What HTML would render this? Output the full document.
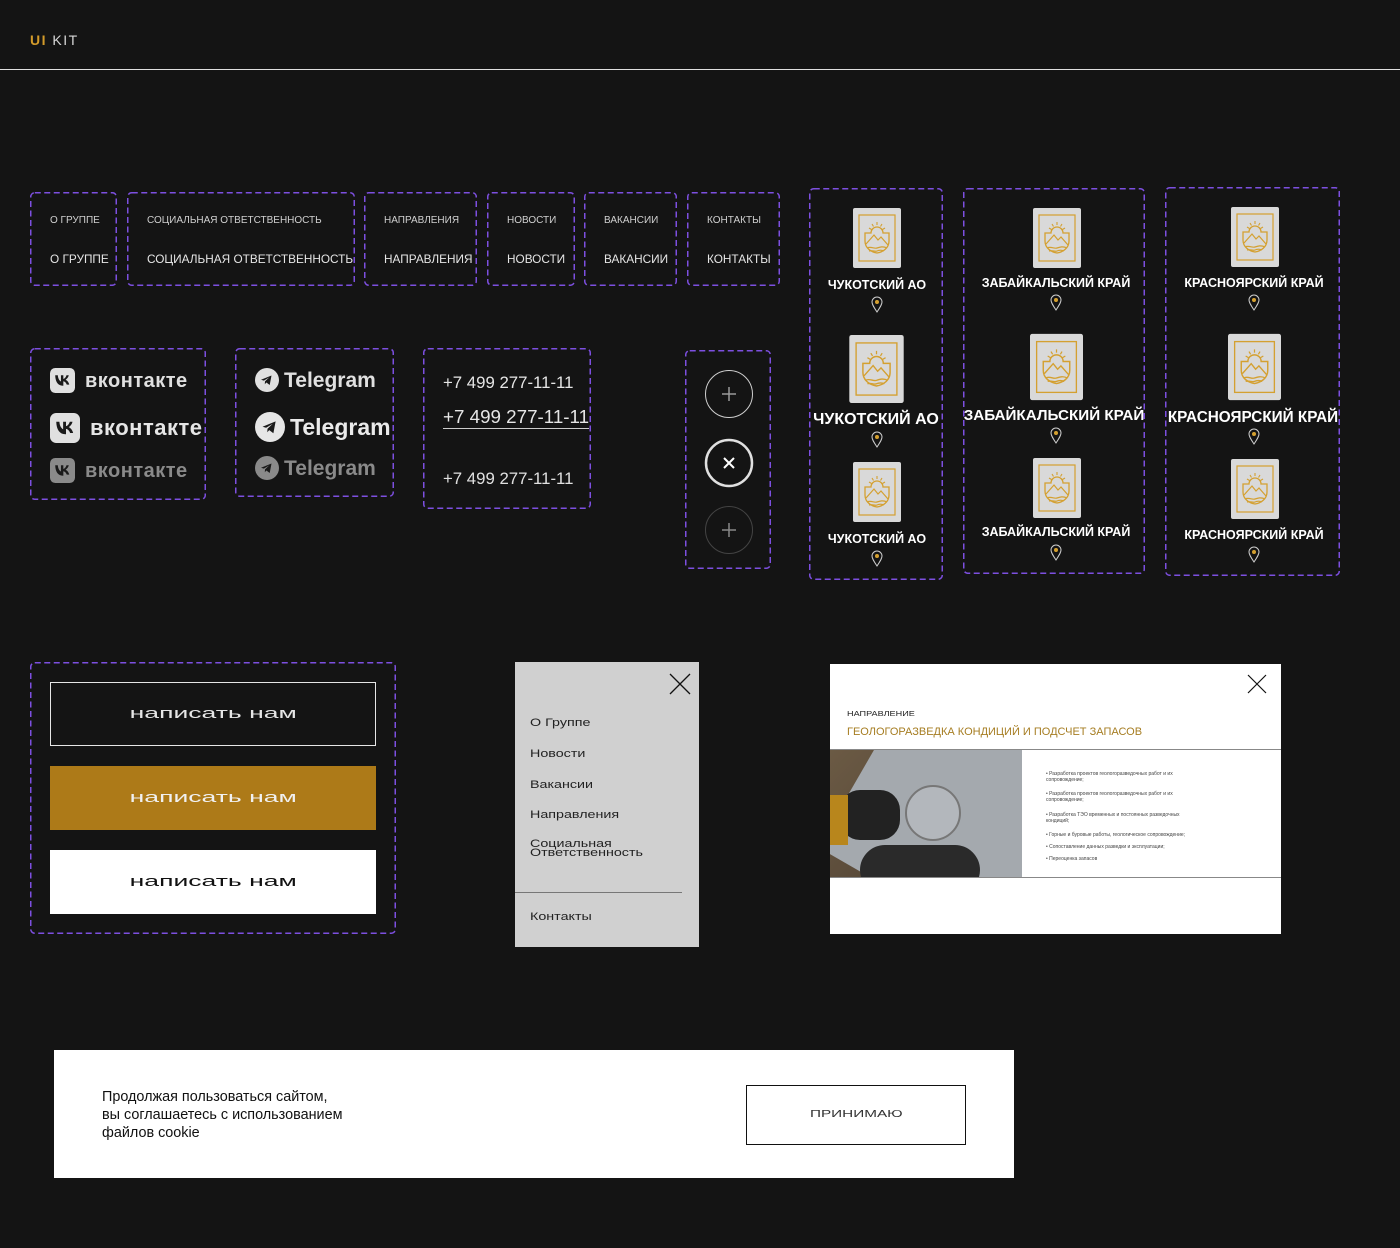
<!DOCTYPE html>
<html><head><meta charset="utf-8">
<style>
*{margin:0;padding:0;box-sizing:border-box}
body{width:1400px;height:1248px;background:#141414;position:relative;overflow:hidden;font-family:"Liberation Sans","DejaVu Sans",sans-serif;color:#e6e6e6}
.a{position:absolute}
.d{position:absolute;overflow:visible}
.d rect{fill:none;stroke:#7d4fe0;stroke-width:1.5;stroke-dasharray:6 3.5}
.t{position:absolute;white-space:nowrap}
.nav1{font-size:10px;color:#d0d0d0;line-height:12px}
.nav2{font-size:11.8px;color:#e6e6e6;line-height:14px}
.reg{position:absolute;white-space:nowrap;font-weight:bold;color:#fff;transform:translateX(-50%)}
.wide{display:inline-block;transform:scaleX(1.77);transform-origin:center}
.mi{position:absolute;left:530px;font-size:11px;color:#222;white-space:nowrap;transform:scaleX(1.3);transform-origin:left}
.bl{position:absolute;left:1046px;font-size:5px;color:#444;line-height:6px;width:150px}
</style></head><body>

<div class="t" style="left:30px;top:32px;font-size:14px;line-height:16px;letter-spacing:1.5px"><span style="color:#d39b2a;font-weight:bold">UI</span> <span style="color:#d8d8d8">KIT</span></div>
<div class="a" style="left:0;top:69px;width:1400px;height:1px;background:#e0e0e0"></div>

<!-- dashed frames -->
<svg class="d" style="left:30px;top:192px" width="87" height="94"><rect x=".75" y=".75" width="85.5" height="92.5" rx="4"/></svg>
<svg class="d" style="left:127px;top:192px" width="228" height="94"><rect x=".75" y=".75" width="226.5" height="92.5" rx="4"/></svg>
<svg class="d" style="left:364px;top:192px" width="113" height="94"><rect x=".75" y=".75" width="111.5" height="92.5" rx="4"/></svg>
<svg class="d" style="left:487px;top:192px" width="88" height="94"><rect x=".75" y=".75" width="86.5" height="92.5" rx="4"/></svg>
<svg class="d" style="left:584px;top:192px" width="93" height="94"><rect x=".75" y=".75" width="91.5" height="92.5" rx="4"/></svg>
<svg class="d" style="left:687px;top:192px" width="93" height="94"><rect x=".75" y=".75" width="91.5" height="92.5" rx="4"/></svg>
<svg class="d" style="left:30px;top:348px" width="176" height="152"><rect x=".75" y=".75" width="174.5" height="150.5" rx="4"/></svg>
<svg class="d" style="left:235px;top:348px" width="159" height="149"><rect x=".75" y=".75" width="157.5" height="147.5" rx="4"/></svg>
<svg class="d" style="left:423px;top:348px" width="168" height="161"><rect x=".75" y=".75" width="166.5" height="159.5" rx="4"/></svg>
<svg class="d" style="left:685px;top:350px" width="86" height="219"><rect x=".75" y=".75" width="84.5" height="217.5" rx="4"/></svg>
<svg class="d" style="left:809px;top:188px" width="134" height="392"><rect x=".75" y=".75" width="132.5" height="390.5" rx="4"/></svg>
<svg class="d" style="left:963px;top:188px" width="182" height="386"><rect x=".75" y=".75" width="180.5" height="384.5" rx="4"/></svg>
<svg class="d" style="left:1165px;top:187px" width="175" height="389"><rect x=".75" y=".75" width="173.5" height="387.5" rx="4"/></svg>
<svg class="d" style="left:30px;top:662px" width="366" height="272"><rect x=".75" y=".75" width="364.5" height="270.5" rx="4"/></svg>

<div class="t nav1" style="left:50px;top:215px">О ГРУППЕ</div>
<div class="t nav2" style="left:50px;top:252px">О ГРУППЕ</div>
<div class="t nav1" style="left:147px;top:215px">СОЦИАЛЬНАЯ ОТВЕТСТВЕННОСТЬ</div>
<div class="t nav2" style="left:147px;top:252px">СОЦИАЛЬНАЯ ОТВЕТСТВЕННОСТЬ</div>
<div class="t nav1" style="left:384px;top:215px">НАПРАВЛЕНИЯ</div>
<div class="t nav2" style="left:384px;top:252px">НАПРАВЛЕНИЯ</div>
<div class="t nav1" style="left:507px;top:215px">НОВОСТИ</div>
<div class="t nav2" style="left:507px;top:252px">НОВОСТИ</div>
<div class="t nav1" style="left:604px;top:215px">ВАКАНСИИ</div>
<div class="t nav2" style="left:604px;top:252px">ВАКАНСИИ</div>
<div class="t nav1" style="left:707px;top:215px">КОНТАКТЫ</div>
<div class="t nav2" style="left:707px;top:252px">КОНТАКТЫ</div>

<!-- VK -->
<svg class="a" style="left:50px;top:368px" width="25" height="25" viewBox="0 0 24 24"><rect width="24" height="24" rx="5" fill="#e0e0e0"/><path d="M5 7h2.5c.3 4 2 5.5 3 6V7h2.3v3.5c1.2-.1 2.5-1.6 3-3.5h2.2c-.4 2-1.9 3.6-3 4.3 1.1.5 2.8 1.9 3.5 4.7h-2.4c-.6-1.8-2-3.2-3.3-3.3V17h-.3C7.700 17 5.200 13.5 5 7z" fill="#1a1a1a"/></svg>
<div class="t" style="left:85px;top:369px;font-size:20px;line-height:24px;font-weight:bold;color:#e0e0e0;letter-spacing:0.5px">вконтакте</div>
<svg class="a" style="left:50px;top:413px" width="30" height="30" viewBox="0 0 24 24"><rect width="24" height="24" rx="5" fill="#e0e0e0"/><path d="M5 7h2.5c.3 4 2 5.5 3 6V7h2.3v3.5c1.2-.1 2.5-1.6 3-3.5h2.2c-.4 2-1.9 3.6-3 4.3 1.1.5 2.8 1.9 3.5 4.7h-2.4c-.6-1.8-2-3.2-3.3-3.3V17h-.3C7.700 17 5.200 13.5 5 7z" fill="#1a1a1a"/></svg>
<div class="t" style="left:90px;top:415px;font-size:22px;line-height:26px;font-weight:bold;color:#e6e6e6;letter-spacing:0.5px">вконтакте</div>
<svg class="a" style="left:50px;top:458px" width="25" height="25" viewBox="0 0 24 24"><rect width="24" height="24" rx="5" fill="#8a8a8a"/><path d="M5 7h2.5c.3 4 2 5.5 3 6V7h2.3v3.5c1.2-.1 2.5-1.6 3-3.5h2.2c-.4 2-1.9 3.6-3 4.3 1.1.5 2.8 1.9 3.5 4.7h-2.4c-.6-1.8-2-3.2-3.3-3.3V17h-.3C7.700 17 5.200 13.5 5 7z" fill="#1a1a1a"/></svg>
<div class="t" style="left:85px;top:459px;font-size:20px;line-height:24px;font-weight:bold;color:#8a8a8a;letter-spacing:0.5px">вконтакте</div>

<!-- Telegram -->
<svg class="a" style="left:255px;top:368px" width="24" height="24" viewBox="0 0 24 24"><circle cx="12" cy="12" r="12" fill="#e0e0e0"/><path d="M6 11.8l10.5-4.3-1.8 9.5-3.3-2.5-1.6 1.7.2-2.8 4.2-4-5.3 3.2z" fill="#1a1a1a"/></svg>
<div class="t" style="left:284px;top:368px;font-size:21px;line-height:26px;font-weight:bold;color:#e0e0e0">Telegram</div>
<svg class="a" style="left:255px;top:412px" width="30" height="30" viewBox="0 0 24 24"><circle cx="12" cy="12" r="12" fill="#e6e6e6"/><path d="M6 11.8l10.5-4.3-1.8 9.5-3.3-2.5-1.6 1.7.2-2.8 4.2-4-5.3 3.2z" fill="#1a1a1a"/></svg>
<div class="t" style="left:290px;top:413px;font-size:23px;line-height:28px;font-weight:bold;color:#eaeaea">Telegram</div>
<svg class="a" style="left:255px;top:456px" width="24" height="24" viewBox="0 0 24 24"><circle cx="12" cy="12" r="12" fill="#8a8a8a"/><path d="M6 11.8l10.5-4.3-1.8 9.5-3.3-2.5-1.6 1.7.2-2.8 4.2-4-5.3 3.2z" fill="#1a1a1a"/></svg>
<div class="t" style="left:284px;top:456px;font-size:21px;line-height:26px;font-weight:bold;color:#8a8a8a">Telegram</div>

<!-- Phone -->
<div class="t" style="left:443px;top:372px;font-size:16.8px;line-height:21px;color:#e6e6e6">+7 499 277-11-11</div>
<div class="t" style="left:443px;top:405px;font-size:18.8px;line-height:23px;color:#e6e6e6;border-bottom:1px solid #ccc">+7 499 277-11-11</div>
<div class="t" style="left:443px;top:468px;font-size:16.8px;line-height:21px;color:#e0e0e0">+7 499 277-11-11</div>

<!-- circles -->
<svg class="a" style="left:703px;top:368px" width="52" height="220" viewBox="0 0 52 220"><circle cx="26" cy="26" r="23.5" fill="none" stroke="#cfcfcf" stroke-width="1"/><path d="M26 19v14M19 26h14" stroke="#9a9a9a" stroke-width="1.5"/><circle cx="26" cy="95" r="23" fill="none" stroke="#e0e0e0" stroke-width="2.5"/><path d="M21 90l10 10M31 90l-10 10" stroke="#fff" stroke-width="2"/><circle cx="26" cy="162" r="23.5" fill="none" stroke="#444" stroke-width="1"/><path d="M26 155v14M19 162h14" stroke="#888" stroke-width="1.5"/></svg>

<svg width="0" height="0" style="position:absolute"><defs>
<g id="coat"><rect x="0" y="0" width="48" height="60" rx="2" fill="#d9d9d9"/><rect x="6" y="7" width="36" height="46" fill="none" stroke="#d4a030" stroke-width="1.2"/><path d="M12 25h6a6 6 0 0 1 12 0h6v8c0 7-6 11-12 12-6-1-12-5-12-12z" fill="none" stroke="#d4a030" stroke-width="1.3"/><path d="M13 36l8-9 4 5 3-3 7 8M14 40c4-2 7 1 10 0s6-2 10 0M16 43c3-1 6 1 8 0s5-1 7 0" fill="none" stroke="#d4a030" stroke-width="1.2"/><path d="M24 14v3M19 16l1.5 2.5M29 16l-1.5 2.5M16 20l2.5 1.5M32 20l-2.5 1.5" stroke="#d4a030" stroke-width="1.1"/></g>
<g id="pin"><path d="M6 16C2 10 1 8 1 6a5 5 0 0 1 10 0c0 2-1 4-5 10z" fill="none" stroke="#cfcfcf" stroke-width="1"/><circle cx="6" cy="6" r="2" fill="#d4a030"/></g>
</defs></svg>

<!-- col1 center 877 -->
<svg class="a" style="left:853px;top:208px" width="48" height="60" viewBox="0 0 48 60"><use href="#coat"/></svg>
<div class="reg" style="left:877px;top:278px;font-size:12.5px;line-height:14px">ЧУКОТСКИЙ АО</div>
<svg class="a" style="left:871px;top:296px" width="12" height="18" viewBox="0 0 12 18"><use href="#pin"/></svg>
<svg class="a" style="left:849px;top:335px" width="55" height="68" viewBox="0 0 48 60"><use href="#coat"/></svg>
<div class="reg" style="left:876px;top:410px;font-size:16px;line-height:19px">ЧУКОТСКИЙ АО</div>
<svg class="a" style="left:871px;top:431px" width="12" height="18" viewBox="0 0 12 18"><use href="#pin"/></svg>
<svg class="a" style="left:853px;top:462px" width="48" height="60" viewBox="0 0 48 60"><use href="#coat"/></svg>
<div class="reg" style="left:877px;top:532px;font-size:12.5px;line-height:14px">ЧУКОТСКИЙ АО</div>
<svg class="a" style="left:871px;top:550px" width="12" height="18" viewBox="0 0 12 18"><use href="#pin"/></svg>

<!-- col2 center 1056 -->
<svg class="a" style="left:1033px;top:208px" width="48" height="60" viewBox="0 0 48 60"><use href="#coat"/></svg>
<div class="reg" style="left:1056px;top:276px;font-size:12.5px;line-height:14px">ЗАБАЙКАЛЬСКИЙ КРАЙ</div>
<svg class="a" style="left:1050px;top:294px" width="12" height="18" viewBox="0 0 12 18"><use href="#pin"/></svg>
<svg class="a" style="left:1030px;top:333px" width="53" height="68" viewBox="0 0 48 60"><use href="#coat"/></svg>
<div class="reg" style="left:1054px;top:406px;font-size:15.2px;line-height:19px">ЗАБАЙКАЛЬСКИЙ КРАЙ</div>
<svg class="a" style="left:1050px;top:427px" width="12" height="18" viewBox="0 0 12 18"><use href="#pin"/></svg>
<svg class="a" style="left:1033px;top:458px" width="48" height="60" viewBox="0 0 48 60"><use href="#coat"/></svg>
<div class="reg" style="left:1056px;top:525px;font-size:12.5px;line-height:14px">ЗАБАЙКАЛЬСКИЙ КРАЙ</div>
<svg class="a" style="left:1050px;top:544px" width="12" height="18" viewBox="0 0 12 18"><use href="#pin"/></svg>

<!-- col3 center 1254 -->
<svg class="a" style="left:1231px;top:207px" width="48" height="60" viewBox="0 0 48 60"><use href="#coat"/></svg>
<div class="reg" style="left:1254px;top:276px;font-size:12.5px;line-height:14px">КРАСНОЯРСКИЙ КРАЙ</div>
<svg class="a" style="left:1248px;top:294px" width="12" height="18" viewBox="0 0 12 18"><use href="#pin"/></svg>
<svg class="a" style="left:1228px;top:333px" width="53" height="68" viewBox="0 0 48 60"><use href="#coat"/></svg>
<div class="reg" style="left:1253px;top:408px;font-size:15.3px;line-height:19px">КРАСНОЯРСКИЙ КРАЙ</div>
<svg class="a" style="left:1248px;top:428px" width="12" height="18" viewBox="0 0 12 18"><use href="#pin"/></svg>
<svg class="a" style="left:1231px;top:459px" width="48" height="60" viewBox="0 0 48 60"><use href="#coat"/></svg>
<div class="reg" style="left:1254px;top:528px;font-size:12.5px;line-height:14px">КРАСНОЯРСКИЙ КРАЙ</div>
<svg class="a" style="left:1248px;top:546px" width="12" height="18" viewBox="0 0 12 18"><use href="#pin"/></svg>

<!-- buttons -->
<div class="a" style="left:50px;top:682px;width:326px;height:64px;border:1.5px solid #e6e6e6;text-align:center;line-height:61px;font-size:15px;color:#e6e6e6"><span class="wide">написать нам</span></div>
<div class="a" style="left:50px;top:766px;width:326px;height:64px;background:#ad7a18;text-align:center;line-height:64px;font-size:15px;color:#f0f0f0"><span class="wide">написать нам</span></div>
<div class="a" style="left:50px;top:850px;width:326px;height:64px;background:#fff;text-align:center;line-height:64px;font-size:15px;color:#111"><span class="wide">написать нам</span></div>

<!-- side menu -->
<div class="a" style="left:515px;top:662px;width:184px;height:285px;background:#d0d0d0"></div>
<svg class="a" style="left:669px;top:673px" width="22" height="22" viewBox="0 0 22 22"><path d="M1 1l20 20M21 1L1 21" stroke="#111" stroke-width="1.3"/></svg>
<div class="mi" style="top:717px">О Группе</div>
<div class="mi" style="top:748px">Новости</div>
<div class="mi" style="top:779px">Вакансии</div>
<div class="mi" style="top:809px">Направления</div>
<div class="mi" style="top:840px;line-height:9px">Социальная<br>Ответственность</div>
<div class="a" style="left:515px;top:892px;width:167px;height:1px;background:#777"></div>
<div class="mi" style="top:911px">Контакты</div>

<!-- modal -->
<div class="a" style="left:830px;top:664px;width:451px;height:270px;background:#fff"></div>
<svg class="a" style="left:1247px;top:674px" width="20" height="20" viewBox="0 0 20 20"><path d="M1 1l18 18M19 1L1 19" stroke="#111" stroke-width="1.2"/></svg>
<div class="t" style="left:847px;top:710px;font-size:7px;line-height:9px;color:#222;transform:scaleX(1.3);transform-origin:left">НАПРАВЛЕНИЕ</div>
<div class="t" style="left:847px;top:725px;font-size:11px;line-height:14px;color:#a67d22">ГЕОЛОГОРАЗВЕДКА КОНДИЦИЙ И ПОДСЧЕТ ЗАПАСОВ</div>
<div class="a" style="left:830px;top:749px;width:451px;height:1px;background:#888"></div>
<div class="a" style="left:830px;top:877px;width:451px;height:1px;background:#888"></div>
<div class="a" style="left:830px;top:750px;width:192px;height:127px;overflow:hidden;background:linear-gradient(135deg,#6b5a44 0%,#5a4b3a 50%,#3a3a3a 100%)">
  <div class="a" style="left:30px;top:-60px;width:230px;height:230px;background:#a4a9ae;transform:rotate(30deg)"></div>
  <div class="a" style="left:75px;top:35px;width:56px;height:56px;border-radius:50%;border:2px solid #777;background:#b3b7bc"></div>
  <div class="a" style="left:10px;top:40px;width:60px;height:50px;border-radius:20px;background:#222"></div>
  <div class="a" style="left:0px;top:45px;width:18px;height:50px;background:#b8861c"></div>
  <div class="a" style="left:30px;top:95px;width:120px;height:50px;border-radius:30px;background:#2a2a2a"></div>
</div>
<div class="bl" style="top:771px">• Разработка проектов геологоразведочных работ и их сопровождение;</div>
<div class="bl" style="top:791px">• Разработка проектов геологоразведочных работ и их сопровождение;</div>
<div class="bl" style="top:812px">• Разработка ТЭО временных и постоянных разведочных кондиций;</div>
<div class="bl" style="top:832px;width:200px">• Горные и буровые работы, геологическое сопровождение;</div>
<div class="bl" style="top:844px;width:200px">• Сопоставление данных разведки и эксплуатации;</div>
<div class="bl" style="top:856px">• Переоценка запасов</div>

<!-- cookie -->
<div class="a" style="left:54px;top:1050px;width:960px;height:128px;background:#fff"></div>
<div class="t" style="left:102px;top:1088px;font-size:14.4px;line-height:18px;color:#111">Продолжая пользоваться сайтом,<br>вы соглашаетесь с использованием<br>файлов cookie</div>
<div class="a" style="left:746px;top:1085px;width:220px;height:60px;border:1px solid #111;text-align:center;line-height:58px;font-size:10px;color:#333"><span class="wide" style="transform:scaleX(1.53)">ПРИНИМАЮ</span></div>

</body></html>
